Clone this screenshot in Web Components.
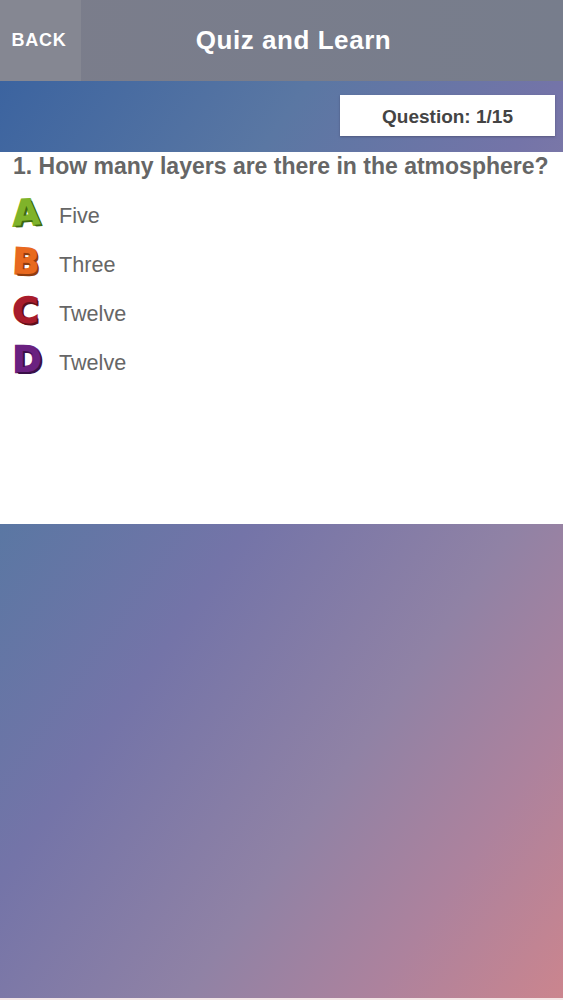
<!DOCTYPE html>
<html lang="en"><head><meta charset="utf-8"><title>Quiz and Learn</title>
<style>html,body{margin:0;padding:0}body{font-family:"Liberation Sans",Arial,sans-serif}</style>
</head><body>
<quiz-app>
  <quiz-header slot="header" title-text="Quiz and Learn">BACK</quiz-header>
  <quiz-counter slot="counter">Question: 1/15</quiz-counter>
  <quiz-card slot="card" question="1. How many layers are there in the atmosphere?">
    <quiz-option letter="A" c1="#7fb32a" c2="#3f6a10" tilt="-3">Five</quiz-option>
    <quiz-option letter="B" c1="#e8691f" c2="#8f3d0e" tilt="3">Three</quiz-option>
    <quiz-option letter="C" c1="#a81c2c" c2="#5e0f1b" tilt="0">Twelve</quiz-option>
    <quiz-option letter="D" c1="#6a2180" c2="#3a1048" tilt="0">Twelve</quiz-option>
  </quiz-card>
</quiz-app>
<script>
function def(name, html, init){
  customElements.define(name, class extends HTMLElement{
    constructor(){super();this.attachShadow({mode:'open'}).innerHTML=html;}
    connectedCallback(){if(init)init(this,this.shadowRoot);}
  });
}
def('quiz-app',`<style>
:host{display:flex;flex-direction:column;width:563px;height:1000px;overflow:hidden;box-sizing:border-box;
background:linear-gradient(125deg,#36609f 0%,#5a77a3 29%,#7474a8 49%,#9082a5 70%,#ad829d 85%,#cb858e 100%);border-bottom:2px solid #f4e6e6}
.band{display:flex;justify-content:flex-end;align-items:flex-start;height:71px;box-sizing:border-box;padding:14px 8px 0 0}
.fill{flex:1}
</style><slot name="header"></slot><div class="band"><slot name="counter"></slot></div><slot name="card"></slot><div class="fill"></div>`);
def('quiz-header',`<style>
:host{display:flex;height:81px;background:linear-gradient(90deg,#7b7d8b,#777d8c);color:#fff;font-family:"Liberation Sans",Arial,sans-serif;font-weight:700}
.back{width:81px;display:flex;align-items:center;justify-content:center;font-size:18px;letter-spacing:.7px;background:#858792;box-sizing:border-box;padding:0 3px 1px 0}
.title{flex:1;display:flex;align-items:center;justify-content:center;font-size:26px;letter-spacing:.55px;padding:0 57px 0 0;box-sizing:border-box}
</style><div class="back"><slot></slot></div><div class="title"></div>`,(h,s)=>{s.querySelector('.title').textContent=h.getAttribute('title-text');});
def('quiz-counter',`<style>
:host{display:flex;align-items:center;justify-content:center;width:215px;height:41px;box-sizing:border-box;padding-top:3px;background:#fff;color:#444;font:700 19px "Liberation Sans",Arial,sans-serif;box-shadow:0 1px 2px rgba(60,60,90,.5)}
</style><slot></slot>`);
def('quiz-card',`<style>
:host{display:flex;flex-direction:column;height:372px;background:#fff;box-sizing:border-box;padding:0 0 0 13px;font-family:"Liberation Sans",Arial,sans-serif}
.q{font-weight:700;font-size:23px;line-height:28px;color:#666;white-space:nowrap}
.list{display:flex;flex-direction:column;margin-top:11px}
</style><div class="q"></div><div class="list"><slot></slot></div>`,(h,s)=>{s.querySelector('.q').textContent=h.getAttribute('question');});
def('quiz-option',`<style>
:host{display:flex;align-items:center;height:49px;color:#666;font:21.6px "Liberation Sans",Arial,sans-serif}
.l{width:46px;height:49px;flex:none;font-family:"DejaVu Sans",sans-serif;font-weight:700;font-size:35px;line-height:44px;box-sizing:border-box;letter-spacing:0}
.l span{display:inline-block;transform-origin:center;paint-order:stroke fill}
</style><div class="l"><span></span></div><div><slot></slot></div>`,(h,s)=>{
  const e=s.querySelector('span'),c1=h.getAttribute('c1'),c2=h.getAttribute('c2');
  e.textContent=h.getAttribute('letter');
  e.style.color=c1;e.style.webkitTextStroke='2.5px '+c1;
  e.style.transform=`rotate(${h.getAttribute('tilt')}deg)`;
  e.style.textShadow=`1px 1px 0 ${c2},2px 2px 0 ${c2}`;
});
</script>
</body></html>
